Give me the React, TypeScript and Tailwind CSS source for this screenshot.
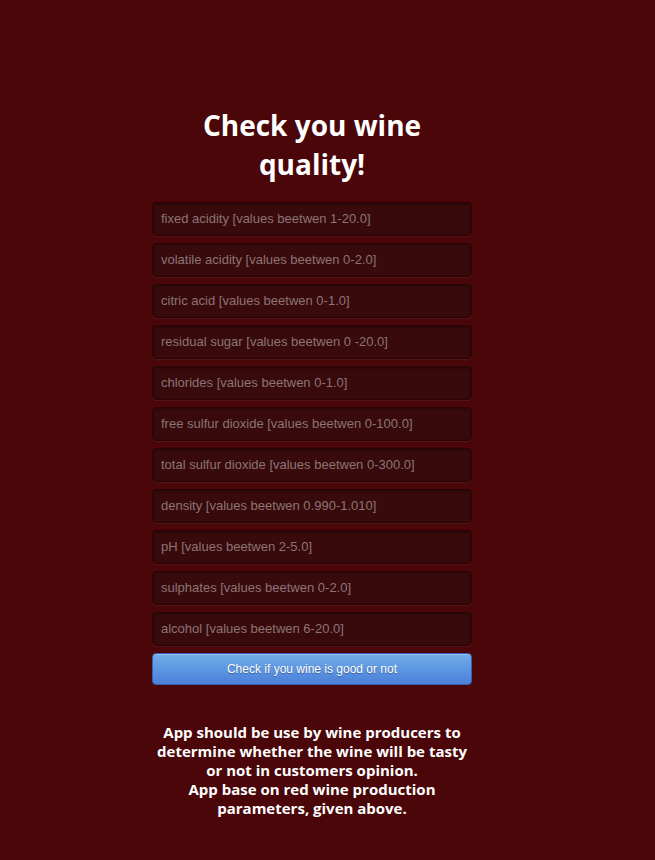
import React from 'react';

const fields = [
  'fixed acidity [values beetwen 1-20.0]',
  'volatile acidity [values beetwen 0-2.0]',
  'citric acid [values beetwen 0-1.0]',
  'residual sugar [values beetwen 0 -20.0]',
  'chlorides [values beetwen 0-1.0]',
  'free sulfur dioxide [values beetwen 0-100.0]',
  'total sulfur dioxide [values beetwen 0-300.0]',
  'density [values beetwen 0.990-1.010]',
  'pH [values beetwen 2-5.0]',
  'sulphates [values beetwen 0-2.0]',
  'alcohol [values beetwen 6-20.0]',
];

const App: React.FC = () => {
  return (
    <div className="min-h-[860px] w-full bg-[#4a0608] font-['Open_Sans',sans-serif]">
      <div className="ml-[152px] w-[320px] pt-[106px] flex flex-col">
        <h1 className="text-center text-[28px] leading-[39px] font-bold text-white px-[40px] mb-[18px]">
          Check you wine quality!
        </h1>

        <form className="flex flex-col gap-[7px]" onSubmit={(e) => e.preventDefault()}>
          {fields.map((f) => (
            <input
              key={f}
              type="text"
              placeholder={f}
              className="h-[34px] w-full rounded-[4px] border border-[#2a0405] bg-[#380a0c] px-[8px] pb-px font-['Liberation_Sans',Arial,sans-serif] text-[13px] text-white placeholder:text-[#8c7474] shadow-[inset_0_1px_3px_rgba(0,0,0,0.35),0_1px_0_rgba(255,255,255,0.06)] outline-none"
            />
          ))}
          <button
            type="submit"
            className="h-[32px] w-full rounded-[4px] border border-[#3a5fb0] bg-gradient-to-b from-[#72aee6] to-[#4a7fda] font-['Liberation_Sans',Arial,sans-serif] text-[12px] text-white [text-shadow:0_1px_1px_rgba(0,0,0,0.35)] shadow-[inset_0_1px_0_rgba(255,255,255,0.25)]"
          >
            Check if you wine is good or not
          </button>
        </form>

        <p className="mt-[38px] text-center text-[15px] leading-[19px] font-bold text-white">
          App should be use by wine producers to determine whether the wine will be tasty or not in customers opinion.
          <br />
          App base on red wine production parameters, given above.
        </p>
      </div>
    </div>
  );
};

export default App;
